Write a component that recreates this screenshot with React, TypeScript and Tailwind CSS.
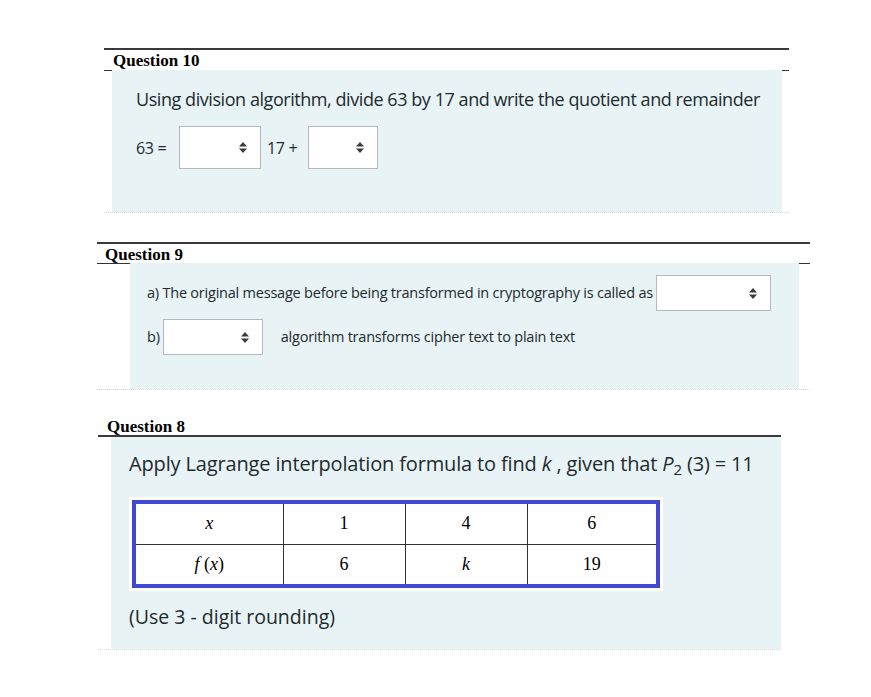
import React from 'react'

// Small stacked up/down caret used inside the select boxes
const Caret = () => (
  <svg width="8" height="11" viewBox="0 0 8 11" className="shrink-0">
    <path d="M4 0 L8 4.5 H0 Z" fill="#3b3b3b" />
    <path d="M4 11 L8 6.5 H0 Z" fill="#3b3b3b" />
  </svg>
)

const SelectBox = ({ className }: { className: string }) => (
  <div className={`flex items-center justify-end bg-white border border-[#b4b9bf] pr-[13px] ${className}`}>
    <Caret />
  </div>
)

const heading = "block font-['Liberation_Serif',serif] font-bold text-[17px] text-black leading-[17px]"
const body = "font-['Open_Sans',sans-serif] text-[#1f2a2e]"

export default function App() {
  return (
    <div className="w-[871px] h-[697px] bg-white relative overflow-hidden">
      {/* Question 10 */}
      <section className="ml-[104px] w-[685px] mt-[48px]">
        <div className="border-t-2 border-[#3a3a3a] h-[22px] pl-[9px] pt-[2px]">
          <span className={heading}>Question 10</span>
        </div>
        <div className="flex">
          <div className="w-[8px] border-t border-[#333]" />
          <div className={`flex-1 h-[142px] bg-[#e7f3f5] pl-[24px] pt-[17px] ${body}`}>
            <p className="text-[18px] tracking-[-0.44px] leading-[24px]">
              Using division algorithm, divide 63 by 17 and write the quotient and remainder
            </p>
            <div className="flex items-center mt-[15px] text-[16px] tracking-[-0.3px]">
              <span className="w-[43px]">63 =</span>
              <SelectBox className="w-[82px] h-[43px]" />
              <span className="ml-[6px] w-[41px]">17 +</span>
              <SelectBox className="w-[70px] h-[43px]" />
            </div>
          </div>
          <div className="w-[7px] border-t border-[#333]" />
        </div>
        <div className="border-b border-dotted border-[#d8d8d8]" />
      </section>

      {/* Question 9 */}
      <section className="ml-[97px] w-[713px] mt-[29px]">
        <div className="border-t-2 border-[#3a3a3a] h-[21px] pl-[8px] pt-[2px]">
          <span className={heading}>Question 9</span>
        </div>
        <div className="flex">
          <div className="w-[33px] border-t border-[#333]" />
          <div className={`flex-1 h-[126px] bg-[#e7f3f5] pl-[17px] pt-[12px] text-[14.5px] tracking-[-0.22px] ${body}`}>
            <div className="flex items-center">
              <span>a) The original message before being transformed in cryptography is called as</span>
              <SelectBox className="ml-[3px] w-[115px] h-[36px]" />
            </div>
            <div className="flex items-center mt-[8px]">
              <span>b)</span>
              <SelectBox className="ml-[3px] w-[100px] h-[36px]" />
              <span className="ml-[18px]">algorithm transforms cipher text to plain text</span>
            </div>
          </div>
          <div className="w-[11px] border-t border-[#333]" />
        </div>
        <div className="border-b border-dotted border-[#d8d8d8]" />
      </section>

      {/* Question 8 */}
      <section className="ml-[98px] w-[683px] mt-[24px]">
        <div className="h-[23px] pl-[9px] pt-[4px] border-b-2 border-[#3a3a3a]">
          <span className={heading}>Question 8</span>
        </div>
        <div className="flex">
          <div className="w-[13px]" />
          <div className={`flex-1 h-[212px] bg-[#e7f3f5] pl-[18px] pt-[14px] ${body}`}>
            <p className="text-[20px] tracking-[-0.15px] leading-[26px]">
              Apply Lagrange interpolation formula to find <i>k</i> , given that <i>P</i>
              <sub className="text-[15px] not-italic">2</sub> (3) = 11
            </p>
            <div className="mt-[20px] w-[534px] bg-white p-[3px]">
              <div className="border-[4px] border-[#4348d2] bg-white">
                <table className="w-full border-collapse font-['Liberation_Serif',serif] text-[18px] text-black text-center">
                  <tbody>
                    <tr className="h-[40px]">
                      <td className="border border-[#333] border-t-0 border-l-0 w-[147px] italic">x</td>
                      <td className="border border-[#333] border-t-0 w-[122px]">1</td>
                      <td className="border border-[#333] border-t-0 w-[122px]">4</td>
                      <td className="border border-[#333] border-t-0 border-r-0">6</td>
                    </tr>
                    <tr className="h-[40px]">
                      <td className="border border-[#333] border-b-0 border-l-0">
                        <i>f</i> (<i>x</i>)
                      </td>
                      <td className="border border-[#333] border-b-0">6</td>
                      <td className="border border-[#333] border-b-0 italic">k</td>
                      <td className="border border-[#333] border-b-0 border-r-0">19</td>
                    </tr>
                  </tbody>
                </table>
              </div>
            </div>
            <p className="mt-[11px] text-[19.5px] tracking-[0px]">(Use 3 - digit rounding)</p>
          </div>
        </div>
        <div className="border-b border-dotted border-[#d8d8d8]" />
      </section>
    </div>
  )
}
